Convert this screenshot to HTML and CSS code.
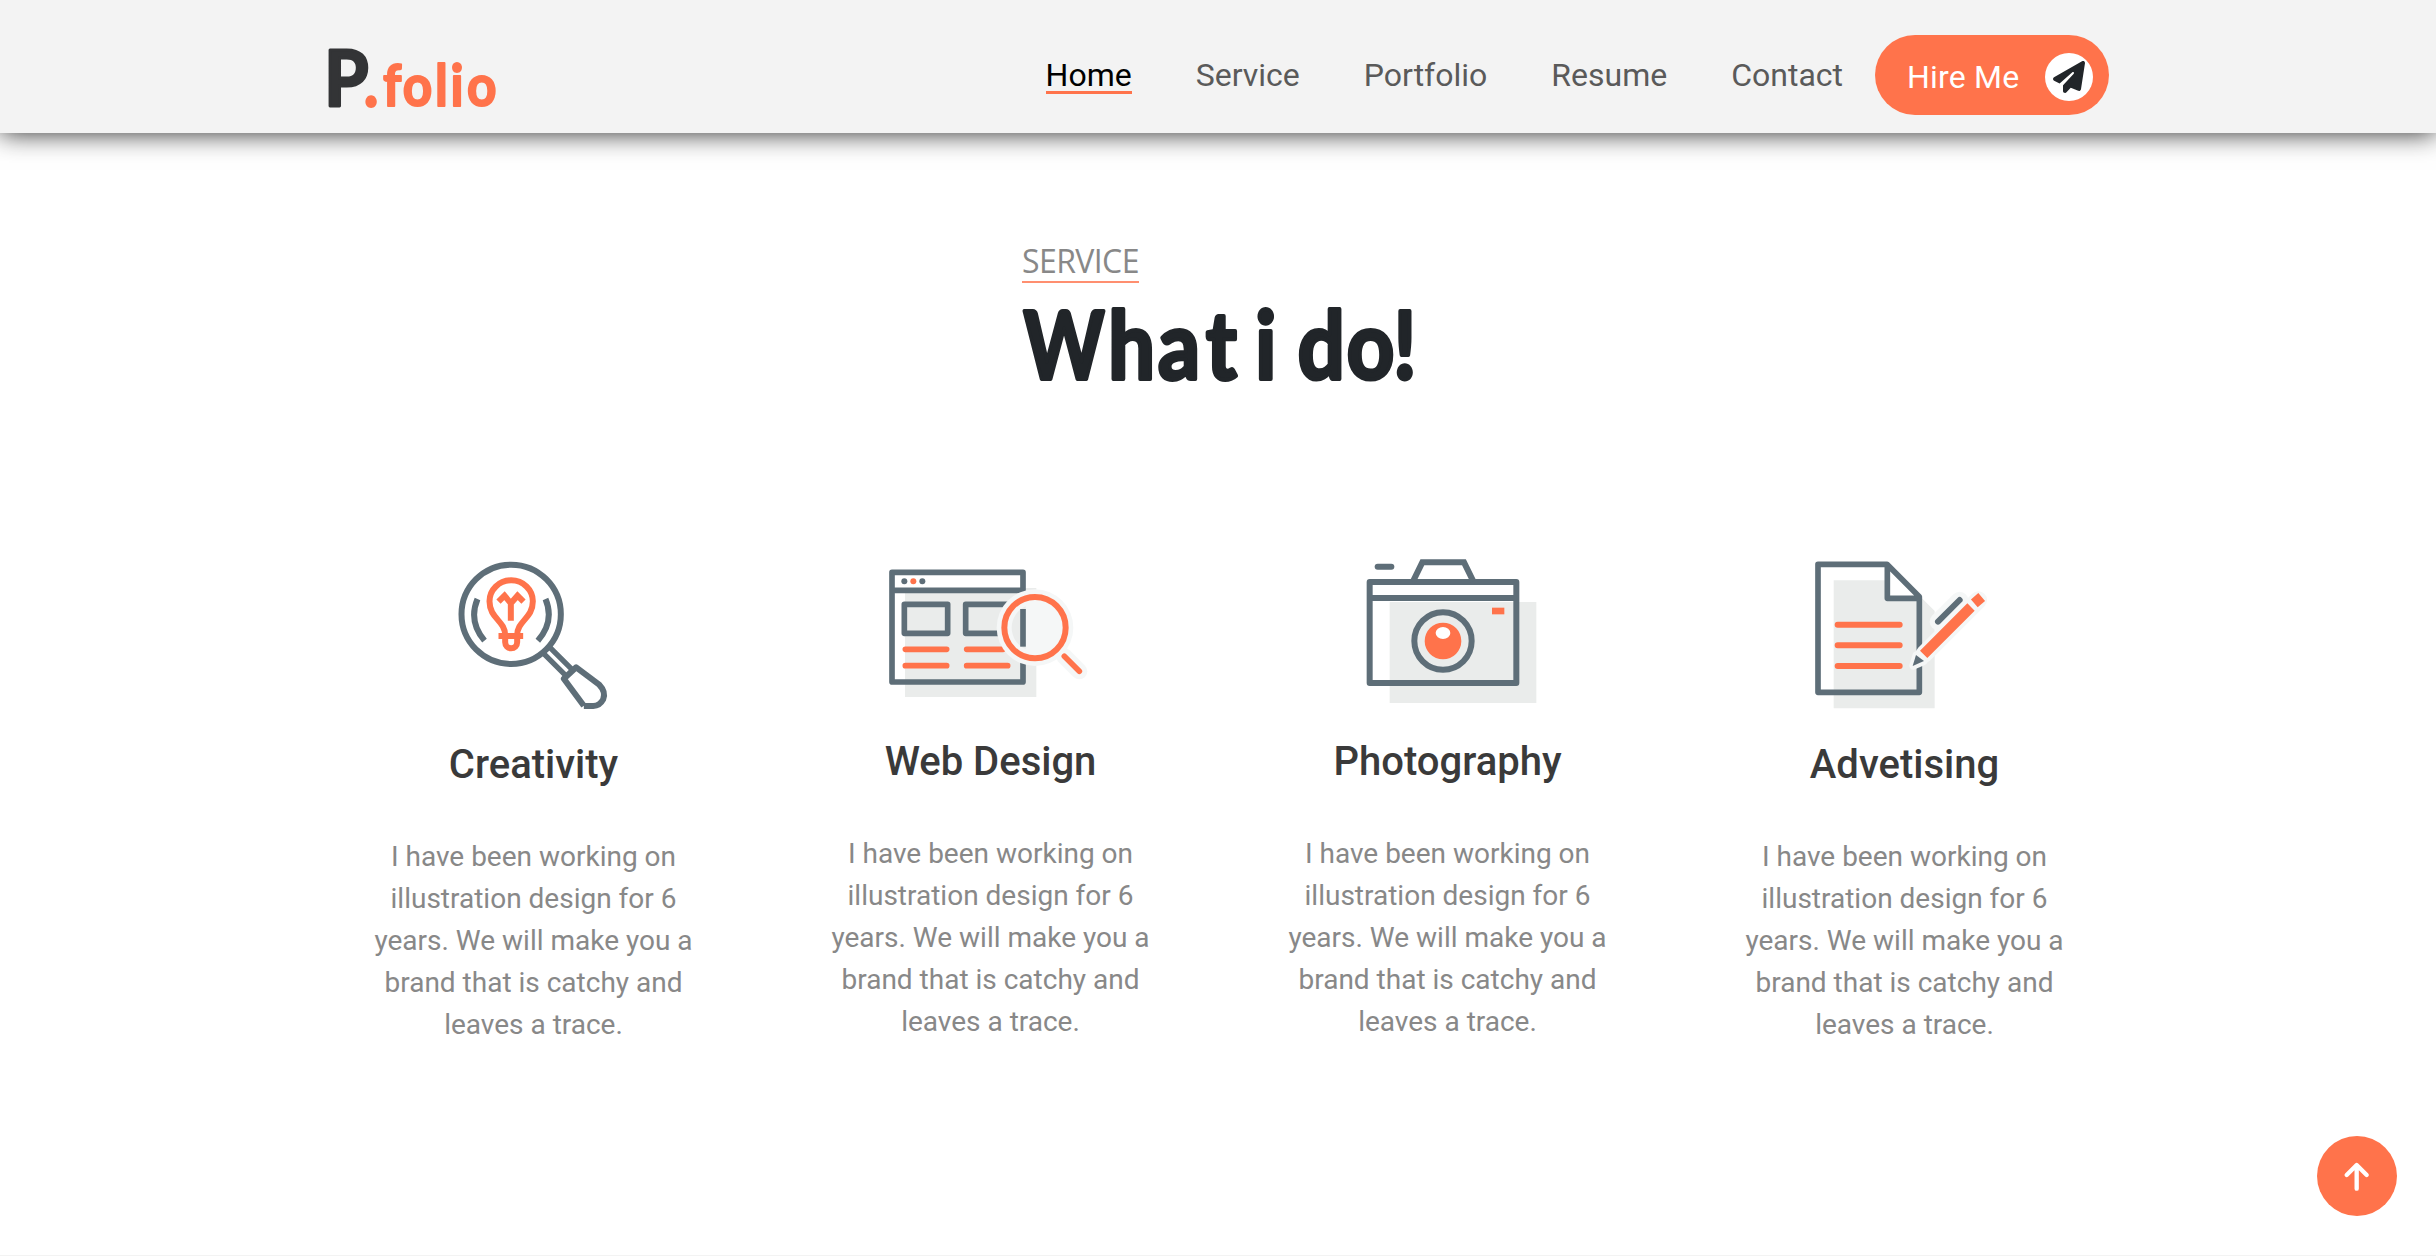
FILE: index.html
```html
<!DOCTYPE html>
<html lang="en">
<head>
<meta charset="utf-8">
<title>P.folio</title>
<link rel="stylesheet" href="styles.css">
</head>
<body>
<header class="header">
  <a class="logo" href="#" aria-label="P.folio">
    <svg width="172" height="64" viewBox="0 0 172 64">
      <g class="logo-text">
        <text class="logo-p" transform="translate(-3.8 58.5) scale(.94 1)">P</text>
        <text class="logo-rest" transform="translate(0 58.5) scale(.9 1)" x="41 61 83 119 136 154.4"><tspan class="logo-dot">.</tspan>folio</text>
      </g>
    </svg>
  </a>
  <nav class="nav">
    <a class="link active" href="#"><span>Home</span></a>
    <a class="link" href="#"><span>Service</span></a>
    <a class="link" href="#"><span>Portfolio</span></a>
    <a class="link" href="#"><span>Resume</span></a>
    <a class="link" href="#"><span>Contact</span></a>
    <a class="hire" href="#">Hire Me
      <span class="hire-icon"><svg width="32" height="32" viewBox="0 0 512 512"><path fill="#212529" d="M498.1 5.6c10.1 7 15.4 19.1 13.5 31.2l-64 416c-1.5 9.7-7.4 18.2-16 23s-18.9 5.4-28 1.6L284 427.7l-68.5 74.1c-8.9 9.7-22.9 12.9-35.2 8.1S160 493.2 160 480V396.4c0-4 1.5-7.8 4.2-10.7L331.8 202.8c5.8-6.3 5.6-16-.4-22s-15.7-6.4-22-.7L106 360.8 17.7 316.6C7.1 311.3 .3 300.7 0 288.9s5.9-22.8 16.1-28.7l448-256c10.7-6.1 23.9-5.5 34 1.4z"/></svg></span>
    </a>
  </nav>
</header>
<main class="service">
  <div class="title">
    <p class="eyebrow">SERVICE</p>
    <h1 class="headline">
      <svg width="394" height="96" viewBox="0 0 394 96">
        <text class="headline-text" transform="translate(1.5 75) scale(.82 1)">W</text>
        <text class="headline-text" transform="translate(0 75) scale(.88 1)" x="98 154.5 209 240 265 295 313.5 369 422">hat i do!</text>
      </svg>
    </h1>
  </div>
  <div class="cards">
    <article class="card low">
      <svg class="art" width="190" height="172" viewBox="-2.5 0 570 516">
        <g fill="none" stroke="#5e6e78" stroke-width="18">
          <circle cx="214" cy="223" r="149"/>
          <path d="M113 177Q85 244 134 302M317 177Q345 244 294 302"/>
          <path d="M311 340L378 407M330 322L397 389" stroke-width="16"/>
          <path stroke-linejoin="round" d="M432 497L372 416L409 382L478 434Q499 456 490 478Q480 497 460 498H432"/>
        </g>
        <g fill="none" stroke="#ff734b" stroke-width="18">
          <path d="M196 286C196 242 149 236 149 184A65 63 0 0 1 279 184C279 236 232 242 232 286"/>
          <path d="M176 288H250M196 292V307A18 18 0 0 0 232 307V292M213 242V190M176 185L194 167L213 190L233 167L251 185"/>
        </g>
      </svg>
      <h2>Creativity</h2>
      <p>I have been working on illustration design for 6 years. We will make you a brand that is catchy and leaves a trace.</p>
    </article>
    <article class="card">
      <svg class="art" width="230" height="172" viewBox="17 0 690 516">
        <path fill="#eaeceb" d="M104 144H498V471H104Z"/>
        <path fill="#fff" d="M66 98H458V151H66ZM66 151H104V426H66Z"/>
        <g fill="none" stroke="#5e6e78" stroke-width="17" stroke-linejoin="round">
          <path d="M65 97H458V426H65ZM65 151H458"/>
          <path d="M102 193H232V280H102ZM286 193H416V280H286Z"/>
        </g>
        <circle cx="102" cy="124" r="9" fill="#5e6e78"/><circle cx="129" cy="124" r="9" fill="#ff734b"/><circle cx="156" cy="124" r="9" fill="#5e6e78"/>
        <path stroke="#ff734b" stroke-width="17" stroke-linecap="round" d="M105 328H229M105 377H229M289 328H398M289 377H412"/>
        <circle cx="494" cy="263" r="115" fill="#f5f7f7"/>
        <path stroke="#f5f7f7" stroke-width="48" stroke-linecap="round" d="M581 348L627 394"/>
        <path fill="#eaeceb" d="M424 263A70 70 0 0 1 466 199V327A70 70 0 0 1 424 263Z"/>
        <path stroke="#5e6e78" stroke-width="17" d="M458 207V320"/>
        <circle cx="494" cy="263" r="92" fill="none" stroke="#ff734b" stroke-width="18"/>
        <path stroke="#ff734b" stroke-width="17" stroke-linecap="round" d="M582 349L627 394"/>
      </svg>
      <h2>Web Design</h2>
      <p>I have been working on illustration design for 6 years. We will make you a brand that is catchy and leaves a trace.</p>
    </article>
    <article class="card">
      <svg class="art" width="220" height="172" viewBox="-7 0 660 516">
        <path fill="#eaeceb" d="M148 186H588V489H148Z"/>
        <g fill="none" stroke="#5e6e78" stroke-width="18" stroke-linejoin="round">
          <path d="M88 126H528V429H88ZM88 174H528"/>
          <path stroke-linejoin="miter" d="M218 124L246 67H371L399 124"/>
          <path stroke-linecap="round" d="M112 80H153"/>
          <circle cx="308" cy="303" r="86"/>
        </g>
        <circle cx="308" cy="303" r="55" fill="#ff734b"/>
        <ellipse cx="308" cy="279" rx="22" ry="18" fill="#fff"/>
        <path fill="#ff734b" d="M455 203H492V223H455Z"/>
      </svg>
      <h2>Photography</h2>
      <p>I have been working on illustration design for 6 years. We will make you a brand that is catchy and leaves a trace.</p>
    </article>
    <article class="card low">
      <svg class="art" width="220" height="172" viewBox="13 0 660 516">
        <path fill="#eaeceb" d="M129 121H340L432 213V505H129Z"/>
        <path fill="#fff" d="M290 75L386 170V174H290Z"/>
        <path fill="none" stroke="#5e6e78" stroke-width="17" stroke-linejoin="round" d="M82 73H289L386 170V457H82ZM290 75V175H386"/>
        <path stroke="#ff734b" stroke-width="18" stroke-linecap="round" d="M141 254H327M141 316H327M141 378H327"/>
        <g stroke="#f5f7f7" stroke-linecap="round" stroke-linejoin="round">
          <path stroke-width="52" d="M401 342L563 180M443 245L507 181"/>
          <path fill="#f5f7f7" stroke-width="24" d="M368 377L377 347L399 363Z"/>
        </g>
        <path stroke="#5e6e78" stroke-width="18" stroke-linecap="round" d="M442 245L507 180"/>
        <path stroke="#ff734b" stroke-width="31" d="M399 343L541 201M551 190L573 171"/>
        <path fill="#5e6e78" d="M366 378L376 345L400 363Z"/>
      </svg>
      <h2>Advetising</h2>
      <p>I have been working on illustration design for 6 years. We will make you a brand that is catchy and leaves a trace.</p>
    </article>
  </div>
</main>
<div class="next-section"></div>
<a class="to-top" href="#" aria-label="Back to top">
  <svg width="80" height="80" viewBox="0 0 240 240"><path fill="none" stroke="#fff" stroke-width="13" stroke-linecap="round" stroke-linejoin="round" d="M119 88V158M89 117L119 87L149 117"/></svg>
</a>
</body>
</html>
```
FILE: styles.css
```css
* { box-sizing: border-box; }
body {
  margin: 0;
  height: 1256px;
  overflow: hidden;
  display: flex;
  flex-direction: column;
  background: #fff;
  font-family: Roboto, sans-serif;
  color: #212529;
}
a { text-decoration: none; color: inherit; }
.header {
  position: relative;
  flex: none;
  height: 133px;
  padding: 0 327px 0 328px;
  display: flex;
  justify-content: space-between;
  background: #f3f3f3;
  box-shadow: 0 0 25px rgba(0, 0, 0, .85);
}
.logo { padding-top: 47px; }
.logo svg { display: block; overflow: visible; }
.logo-text { font-family: Lato, sans-serif; stroke-linejoin: round; }
.logo-p { font-size: 76px; font-weight: 700; fill: #333436; stroke: #333436; stroke-width: 3; }
.logo-rest { font-size: 57px; font-weight: 700; fill: #ff734b; stroke: #ff734b; stroke-width: 2; }
.logo-dot { stroke-width: 4; }
.nav { display: flex; align-items: flex-start; padding-top: 35px; }
.link {
  padding: 18px 32px 0;
  font-size: 32px;
  line-height: 44px;
  color: #5a5a5a;
}
.link span { display: block; height: 41px; }
.link.active { color: #000; }
.link.active span { border-bottom: 3px solid #ff734b; }
.hire {
  display: flex;
  align-items: center;
  justify-content: space-between;
  width: 234px;
  height: 80px;
  padding: 4px 16px 0 32px;
  border-radius: 40px;
  background: #ff734b;
  color: #fff;
  font-size: 32px;
  letter-spacing: .2px;
}
.hire-icon {
  display: flex;
  align-items: center;
  justify-content: center;
  width: 48px;
  height: 48px;
  border-radius: 50%;
  background: #fff;
}
.service { flex: 1; }
.title { width: 394px; margin: 107px auto 0; padding-left: 1px; }
.eyebrow {
  width: 117px;
  height: 43px;
  margin: 0;
  border-bottom: 2px solid #ff8f70;
  font: 400 32px/41px "Open Sans", sans-serif;
  letter-spacing: -.6px;
  white-space: nowrap;
  color: #888;
}
.headline { margin: 21px 0 0; height: 96px; }
.headline svg { display: block; overflow: visible; }
.headline-text {
  font: 700 94px Lato, sans-serif;
  fill: #212529;
  stroke: #212529;
  stroke-width: 4;
  stroke-linejoin: round;
}
.cards {
  display: grid;
  grid-template-columns: repeat(4, 457px);
  justify-content: center;
  padding-left: 2px;
  margin-top: 140px;
}
.card { text-align: center; }
.art { display: block; margin: 0 auto; }
.card h2 {
  margin: 26px 0 0;
  font-size: 40px;
  font-weight: 500;
  line-height: 48px;
  color: #3a3a3a;
}
.card.low h2 { margin-top: 29px; }
.card p {
  width: 330px;
  margin: 47px auto 0;
  font-size: 28px;
  line-height: 42px;
  color: #888;
}
.next-section { flex: none; height: 1px; background: #f3f3f3; }
.to-top {
  position: fixed;
  right: 39px;
  bottom: 40px;
  width: 80px;
  height: 80px;
  border-radius: 50%;
  background: #ff734b;
}
.to-top svg { display: block; }
```
